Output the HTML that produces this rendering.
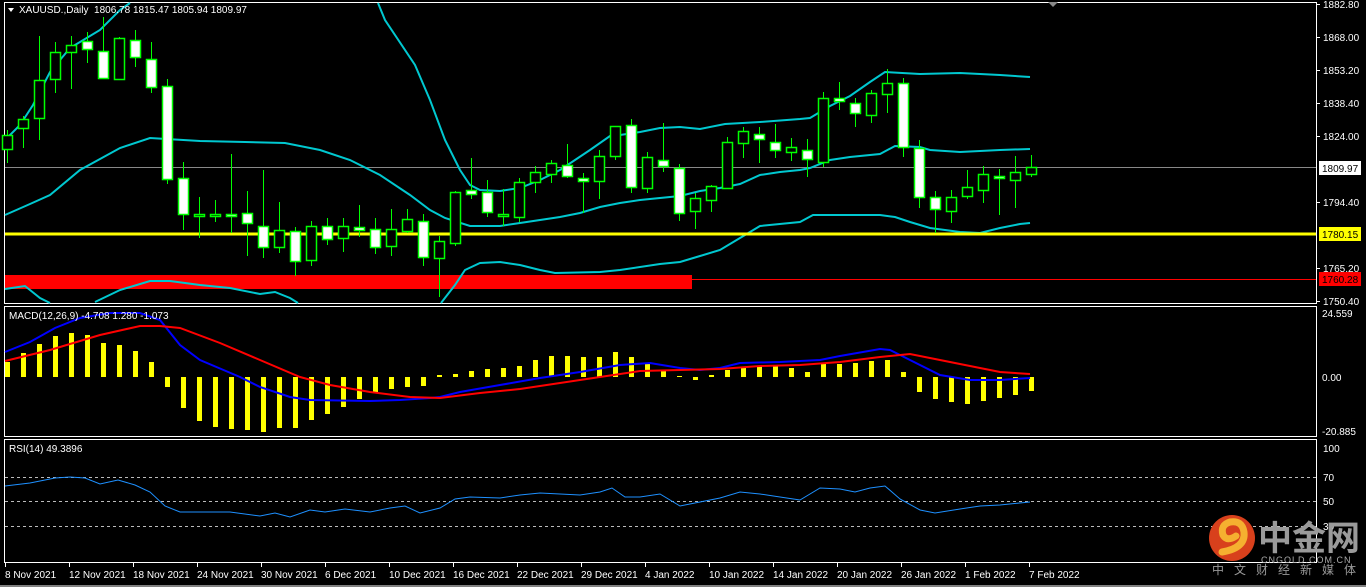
<!DOCTYPE html>
<html><head><meta charset="utf-8">
<style>
html,body{margin:0;padding:0;background:#000;width:1366px;height:587px;overflow:hidden}
svg{display:block}
text{font-family:"Liberation Sans",sans-serif;font-size:10px;fill:#fff}
</style></head><body>
<svg id="s" width="1366" height="587" xmlns="http://www.w3.org/2000/svg">
<rect width="1366" height="587" fill="#000"/>
<g id="g"></g>
</svg>
<script>
var g=document.getElementById('g'),h='';
function pl(pts,c,w,extra){h+='<polyline fill="none" stroke="'+c+'" stroke-width="'+w+'" '+(extra||'')+' points="'+pts.map(function(p){return p.join(',')}).join(' ')+'"/>';}
function ln(x1,y1,x2,y2,c,w,extra){h+='<line x1="'+x1+'" y1="'+y1+'" x2="'+x2+'" y2="'+y2+'" stroke="'+c+'" stroke-width="'+(w||1)+'" '+(extra||'')+'/>';}
function tx(x,y,t,c,anchor){h+='<text x="'+x+'" y="'+y+'"'+(c?' style="fill:'+c+'"':'')+(anchor?' text-anchor="'+anchor+'"':'')+'>'+t+'</text>';}
h+='<rect x="4.5" y="2.5" width="1312" height="301" fill="none" stroke="#fff"/>';
h+='<rect x="4.5" y="306.5" width="1312" height="130" fill="none" stroke="#fff"/>';
h+='<rect x="4.5" y="439.5" width="1312" height="123" fill="none" stroke="#fff"/>';
ln(0,586,1366,586,'#fff',1);
h+='<rect x="5" y="275" width="687" height="14" fill="#f00"/>';
ln(692,279.5,1316,279.5,'#f00',1);
ln(5,167.5,1316,167.5,'#888',1);
pl([[5,140],[20,125],[33,105],[50,72],[70,48],[100,30],[120,10],[130,3]],'#00c8d0',2);
pl([[378,3],[385,20],[415,65],[430,100],[445,140],[460,170],[470,185],[480,190],[500,191],[520,188],[540,180],[560,170],[575,160],[590,150],[610,136],[620,135],[640,132],[660,128],[680,127],[700,129],[725,124],[760,122],[800,119],[810,118],[830,106],[850,96],[870,82],[885,72],[920,74],[960,73],[1000,75],[1030,77]],'#00c8d0',2);
pl([[5,215],[30,204],[50,195],[80,170],[120,148],[150,138],[200,141],[245,142],[285,143],[320,150],[350,160],[380,175],[410,195],[430,210],[445,218],[470,226],[500,226],[520,223],[540,220],[560,217],[580,213],[600,207],[620,203],[640,200],[660,198],[680,196],[700,191],[720,188],[740,184],[760,175],[780,172],[800,170],[810,168],[830,160],[850,157],[880,154],[895,146],[920,147],[930,150],[960,152],[1000,150],[1030,149]],'#00c8d0',2);
pl([[5,289],[25,286],[40,298],[50,303]],'#00c8d0',2);
pl([[95,302],[120,290],[150,281],[170,281],[200,285],[230,288],[260,294],[275,292],[290,298],[298,303]],'#00c8d0',2);
pl([[441,303],[455,285],[465,270],[480,263],[500,262],[520,265],[540,270],[555,273],[600,272],[620,270],[660,264],[680,262],[700,256],[720,250],[740,238],[760,226],[800,222],[813,215],[850,215],[880,215],[895,217],[910,222],[930,228],[960,232],[980,233],[1000,228],[1020,224],[1030,223]],'#00c8d0',2);
ln(5,234,1316,234,'#ff0',3);
var C=[[130,163,135,149,0],[116,148,119,128,0],[36,140,80,118,0],[42,93,52,79,0],[36,89,45,52,0],[32,63,41,49,1],[17,78,51,78,1],[37,80,38,79,0],[30,67,40,57,1],[42,93,59,87,1],[79,184,86,179,1],[162,230,178,214,1],[197,238,215,215,0],[200,222,215,215,0],[154,233,214,216,1],[191,256,213,223,1],[170,258,226,247,1],[202,253,230,247,0],[227,276,231,261,1],[221,266,226,260,0],[218,245,226,239,1],[218,252,226,238,0],[205,237,228,229,1],[218,254,229,247,1],[209,256,229,246,0],[209,233,219,231,0],[214,266,221,257,1],[236,297,241,258,0],[191,246,192,243,0],[158,199,190,194,1],[180,217,192,212,1],[189,226,215,215,0],[178,222,182,217,0],[166,193,172,182,0],[160,183,163,174,0],[144,178,165,176,1],[173,213,178,181,1],[150,199,156,181,0],[126,160,126,156,0],[119,193,125,187,1],[152,193,157,188,0],[123,172,160,166,1],[164,221,168,213,1],[193,229,198,211,0],[185,212,186,200,0],[137,189,142,188,0],[127,158,131,143,0],[127,163,134,139,1],[124,158,142,150,1],[138,161,147,152,0],[139,177,150,159,1],[92,167,98,162,0],[82,110,98,101,1],[98,127,103,113,1],[90,123,93,115,0],[69,113,83,94,0],[78,157,83,147,1],[140,208,148,197,1],[191,233,197,209,1],[190,223,197,211,0],[170,199,187,196,0],[166,203,174,190,0],[169,215,176,178,1],[156,208,172,180,0],[155,177,167,174,0]];
for(var i=0;i<C.length;i++){var c=C[i],x=7+16*i;
 ln(x+.5,c[0],x+.5,c[1],'#0f0',1);
 var t=c[2],b=c[3];if(b-t<2){t-=1;b+=1;}
 h+='<rect x="'+(x-4.5)+'" y="'+(t+.5)+'" width="10" height="'+(b-t)+'" fill="'+(c[4]?'#fff':'#000')+'" stroke="#0f0" stroke-width="1.5"/>';}
var M=[362,353,344,336,333,335,343,345,351,362,387,408,421,427,429,430,432,428,428,420,414,407,399,393,389,387,386,375,374,371,369,368,366,360,356,356,357,357,352,357,364,371,376,380,375,370,367,366,366,368,372,364,364,363,361,360,372,392,399,402,404,401,398,395,391];
for(i=0;i<M.length;i++){var x=5+16*i,y=M[i],t=Math.min(y,377),bb=Math.max(y,377);h+='<rect x="'+x+'" y="'+t+'" width="5" height="'+Math.max(bb-t,1)+'" fill="#ff0"/>';}
pl([[5,352],[30,342],[55,328],[80,318],[110,313],[140,313],[160,320],[180,345],[200,360],[240,377],[260,387],[290,397],[310,400],[370,401],[400,400],[430,398],[440,397],[460,392],[500,385],[540,378],[580,372],[620,365],[650,363],[680,368],[700,370],[720,368],[740,363],[780,362],[820,360],[840,356],[880,349],[890,350],[910,360],[940,375],[970,380],[1000,380],[1030,378]],'#00f',2);
pl([[5,361],[50,350],[100,335],[140,326],[160,326],[180,328],[220,343],[260,360],[300,377],[330,385],[370,392],[410,397],[440,398],[480,393],[520,389],[560,383],[600,377],[640,371],[680,370],[720,369],[760,366],[800,365],[840,362],[880,357],[910,354],[940,360],[970,366],[1000,372],[1030,374]],'#f00',2);
[477,501,526].forEach(function(y){ln(5,y+.5,1316,y+.5,'#bbb',1,'stroke-dasharray="3,3"');});
pl([[5,486],[30,483],[55,478],[70,477],[85,478],[100,484],[118,480],[135,485],[150,492],[165,506],[180,512],[230,512],[260,516],[275,513],[290,517],[310,510],[325,512],[345,509],[370,512],[390,508],[405,506],[420,513],[440,508],[455,499],[470,497],[500,498],[520,495],[540,493],[560,494],[580,495],[600,492],[612,488],[625,497],[640,497],[660,494],[680,506],[700,502],[720,498],[740,492],[760,494],[780,497],[800,500],[820,488],[840,489],[855,492],[870,488],[885,486],[900,499],[920,510],[935,513],[960,509],[980,506],[1000,505],[1030,502]],'#1e90ff',1);
h+='<polygon points="8,8 14,8 11,12" fill="#fff"/>';
tx(19,13,'XAUUSD.,Daily&#160;&#160;1806.78 1815.47 1805.94 1809.97');
tx(9,319,'MACD(12,26,9) -4.708 1.280 -1.073');
tx(9,452,'RSI(14) 49.3896');
h+='<polygon points="1048,2 1058,2 1053,7" fill="#888"/>';
var R=[[1882.80,4],[1868.00,37],[1853.20,70],[1838.40,103],[1824.00,136],[1794.40,202],[1765.20,268],[1750.40,301]];
R.forEach(function(r){ln(1316,r[1]+.5,1320,r[1]+.5,'#fff');tx(1323,r[1]+4,r[0].toFixed(2));});
h+='<rect x="1319" y="161" width="42" height="14" fill="#fff"/>';tx(1322,172,'1809.97','#000');
h+='<rect x="1319" y="227" width="42" height="14" fill="#ff0"/>';tx(1322,238,'1780.15','#000');
h+='<rect x="1319" y="272" width="42" height="14" fill="#f00"/>';tx(1322,283,'1760.28','#000');
tx(1322,317,'24.559');tx(1322,381,'0.00');tx(1322,435,'-20.885');
tx(1323,452,'100');tx(1323,481,'70');tx(1323,505,'50');tx(1323,530,'30');
var D=['8 Nov 2021','12 Nov 2021','18 Nov 2021','24 Nov 2021','30 Nov 2021','6 Dec 2021','10 Dec 2021','16 Dec 2021','22 Dec 2021','29 Dec 2021','4 Jan 2022','10 Jan 2022','14 Jan 2022','20 Jan 2022','26 Jan 2022','1 Feb 2022','7 Feb 2022'];
D.forEach(function(d,i){var x=5+64*i;ln(x+.5,563,x+.5,567,'#fff');tx(x,578,d);});
h+='<circle cx="1232" cy="538" r="23" fill="#d8401c"/>';
h+='<path d="M1222 552 Q1246 548 1244 532 Q1242 520 1230 522 Q1220 525 1223 535 Q1227 542 1236 536" fill="none" stroke="#f5b030" stroke-width="7" stroke-linecap="round"/>';
h+='<text x="1258" y="550" style="font-family:\'Noto Sans CJK SC\',sans-serif;font-size:34px;font-weight:bold;fill:#9a9a9a">中金网</text>';
h+='<text x="1261" y="563" style="font-size:9px;fill:#aaa;letter-spacing:1px">CNGOLD.COM.CN</text>';
h+='<text x="1212" y="574" style="font-family:\'Noto Sans CJK SC\',sans-serif;font-size:12px;fill:#999;letter-spacing:10px">中文财经新媒体</text>';
g.innerHTML=h;
</script>
</body></html>
